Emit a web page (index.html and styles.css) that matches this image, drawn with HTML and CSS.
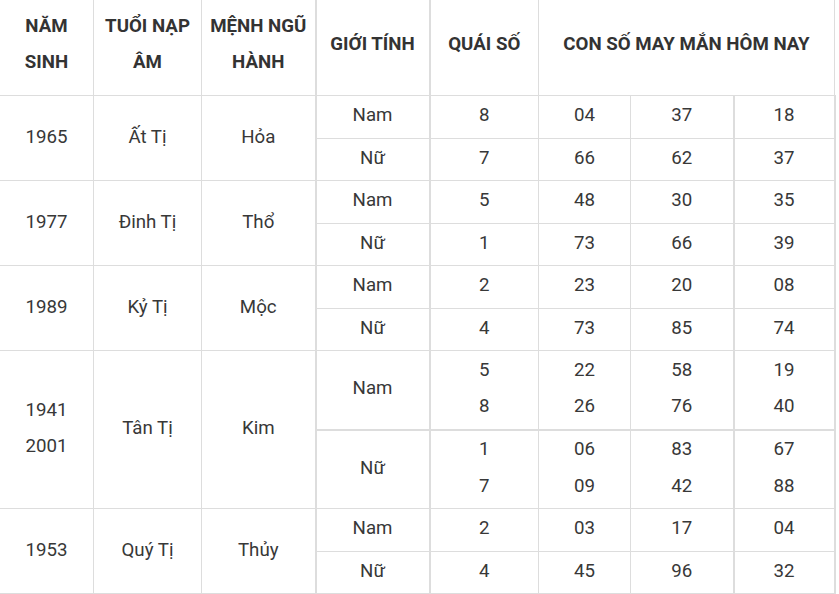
FILE: index.html
```html
<!DOCTYPE html>
<html lang="vi">
<head>
<meta charset="utf-8">
<link rel="stylesheet" href="styles.css">
</head>
<body>
<table class="tbl">
  <colgroup>
    <col class="c1"><col class="c2"><col class="c3"><col class="c4"><col class="c5"><col class="c6"><col class="c7"><col class="c8">
  </colgroup>
  <thead>
    <tr class="head">
      <th>NĂM<br>SINH</th>
      <th>TUỔI NẠP<br>ÂM</th>
      <th>MỆNH NGŨ<br>HÀNH</th>
      <th class="sep">GIỚI TÍNH</th>
      <th class="sep">QUÁI SỐ</th>
      <th colspan="3">CON SỐ MAY MẮN HÔM NAY</th>
    </tr>
  </thead>
  <tbody>
    <tr class="r">
      <td rowspan="2">1965</td><td rowspan="2">Ất Tị</td><td rowspan="2">Hỏa</td>
      <td class="sep">Nam</td><td class="sep">8</td><td>04</td><td>37</td><td class="sep">18</td>
    </tr>
    <tr class="r">
      <td class="sep">Nữ</td><td class="sep">7</td><td>66</td><td>62</td><td class="sep">37</td>
    </tr>
    <tr class="r">
      <td rowspan="2">1977</td><td rowspan="2">Đinh Tị</td><td rowspan="2">Thổ</td>
      <td class="sep">Nam</td><td class="sep">5</td><td>48</td><td>30</td><td class="sep">35</td>
    </tr>
    <tr class="r">
      <td class="sep">Nữ</td><td class="sep">1</td><td>73</td><td>66</td><td class="sep">39</td>
    </tr>
    <tr class="r">
      <td rowspan="2">1989</td><td rowspan="2">Kỷ Tị</td><td rowspan="2">Mộc</td>
      <td class="sep">Nam</td><td class="sep">2</td><td>23</td><td>20</td><td class="sep">08</td>
    </tr>
    <tr class="r">
      <td class="sep">Nữ</td><td class="sep">4</td><td>73</td><td>85</td><td class="sep">74</td>
    </tr>
    <tr class="rr">
      <td rowspan="2" class="multi">1941<br>2001</td><td rowspan="2">Tân Tị</td><td rowspan="2">Kim</td>
      <td class="sep thick">Nam</td><td class="sep thick multi">5<br>8</td><td class="thick multi">22<br>26</td><td class="thick multi">58<br>76</td><td class="sep thick multi">19<br>40</td>
    </tr>
    <tr class="rr">
      <td class="sep">Nữ</td><td class="sep multi">1<br>7</td><td class="multi">06<br>09</td><td class="multi">83<br>42</td><td class="sep multi">67<br>88</td>
    </tr>
    <tr class="r">
      <td rowspan="2">1953</td><td rowspan="2">Quý Tị</td><td rowspan="2">Thủy</td>
      <td class="sep">Nam</td><td class="sep">2</td><td>03</td><td>17</td><td class="sep">04</td>
    </tr>
    <tr class="r">
      <td class="sep">Nữ</td><td class="sep">4</td><td>45</td><td>96</td><td class="sep">32</td>
    </tr>
  </tbody>
</table>
</body>
</html>
```

FILE: styles.css
```css
html, body {
  margin: 0;
  padding: 0;
  background: #ffffff;
}
body {
  font-family: Roboto, "Liberation Sans", Arial, sans-serif;
  color: #333333;
}
.tbl {
  border-collapse: collapse;
  table-layout: fixed;
  width: 835px;
  margin-top: -1px;
  margin-left: -1px;
}
.c1 { width: 94px; }
.c2 { width: 108px; }
.c3 { width: 114px; }
.c4 { width: 114px; }
.c5 { width: 109px; }
.c6 { width: 92px; }
.c7 { width: 103px; }
.c8 { width: 101px; }
.tbl th,
.tbl td {
  border: 1px solid #dddddd;
  text-align: center;
  vertical-align: middle;
  padding: 0 0 3px 0;
}
.tbl th {
  font-weight: 700;
  font-size: 18.7px;
  line-height: 36px;
  color: #333333;
  padding-bottom: 7px;
}
.tbl td {
  font-size: 18.7px;
  line-height: 24px;
  color: #383838;
}
.head { height: 96px; }
.r { height: 42.5px; }
.rr { height: 79px; }
.tbl td.multi { line-height: 36.5px; }
.tbl .sep { border-left-width: 2px; }
.tbl td.sep:last-child { border-right-width: 2px; }
.tbl td.thick { border-bottom-width: 2px; }
```
